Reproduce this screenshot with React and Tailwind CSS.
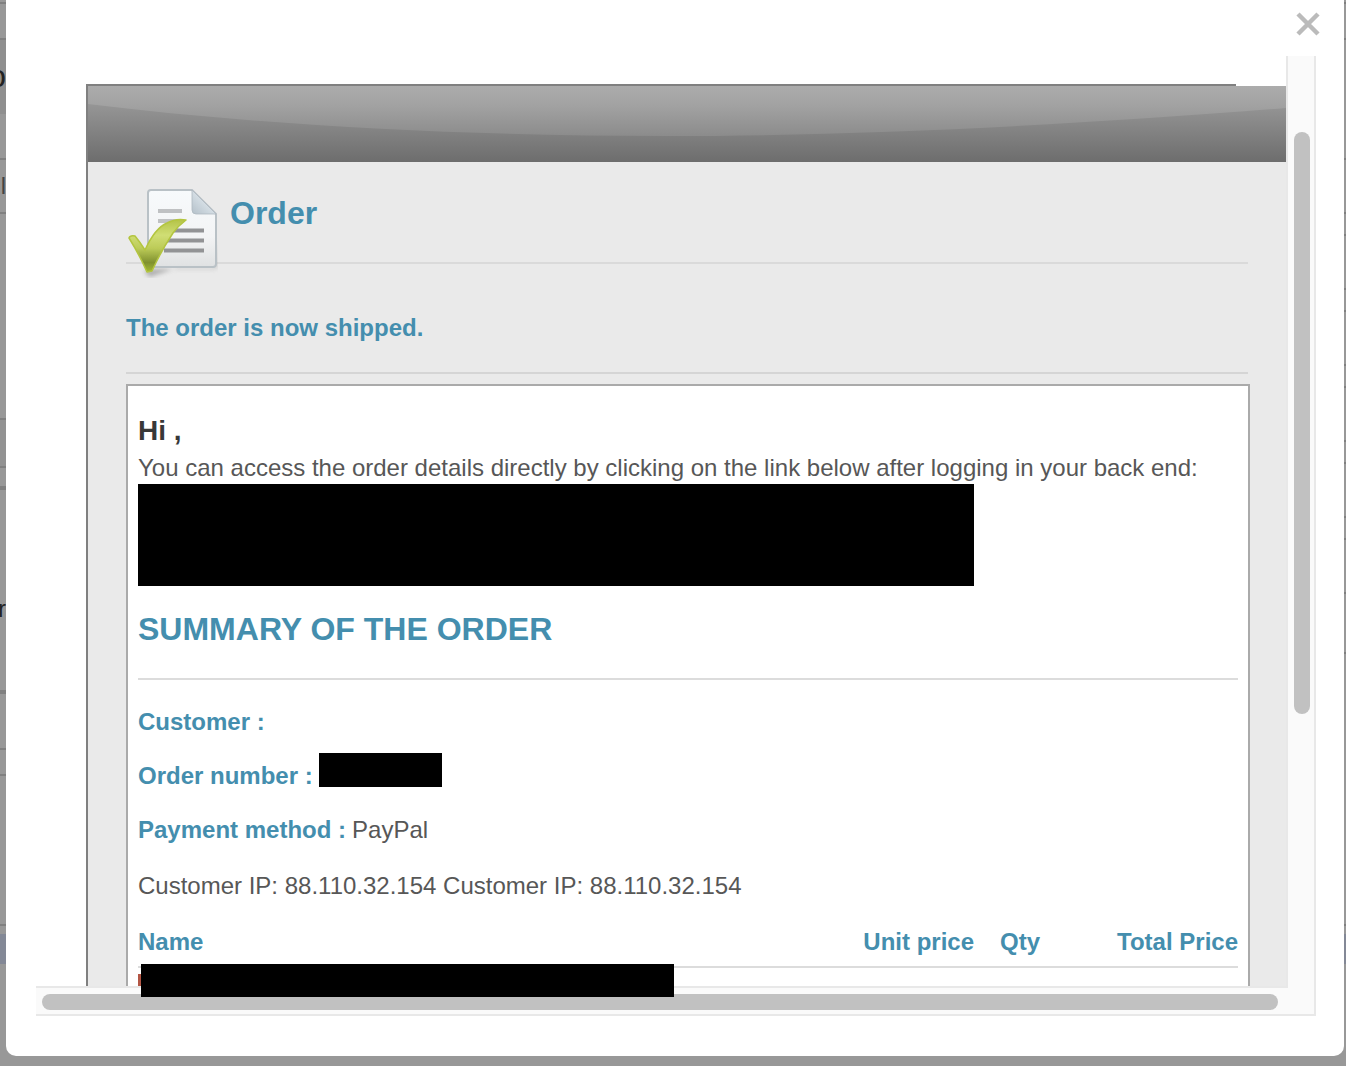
import React from 'react'

// Rows of the page behind the dialog, only their ends show at its sides
const leftRows = [
  'h-1 border-b-2',
  'h-9 border-b-2',
  'h-[74px] bg-[#8f8f8f]',
  'h-[46px] border-b-2',
  'h-[54px] border-b-2',
  'h-[206px] border-b-2 border-[#676767]',
  'h-12 border-b-2 border-[#676767] bg-[#929292]',
  'h-[22px] border-b-4',
  'h-[204px] border-b-4',
  'h-14 border-b-2',
  'h-[26px] border-b-2',
  'h-[150px] border-b-2',
  'h-2',
  'h-[30px] bg-[#838896]',
]

const leftText = {
  2: { text: 'o', className: 'text-[32px] leading-[72px]' },
  4: { text: 'l', className: 'text-2xl leading-[52px] text-[#444]' },
  8: { text: 'r', className: 'text-2xl leading-[238px]' },
}

const rightRows = [
  'h-1 border-b-2',
  'h-9 border-b-2',
  'h-[120px] border-b-2',
  'h-[54px] border-b-2',
  'h-[22px] border-b-2',
  'h-[54px] border-b-2',
  'h-[22px] border-b-2',
  'h-[54px] border-b-2',
  'h-[22px] border-b-2',
  'h-[54px] border-b-2',
  'h-[22px] border-b-2',
  'h-[54px] border-b-2',
  'h-[22px] border-b-2',
  'h-[54px] border-b-2',
  'h-[60px] border-b-2',
  'h-[272px] border-b-2',
  'h-2',
  'h-[30px] bg-[#838896]',
]

function PageEdge({ rows, labels = {}, className }) {
  return (
    <div aria-hidden="true" className={`shrink-0 overflow-hidden text-[#222] ${className}`}>
      {rows.map((row, i) => (
        <div key={i} className={`flex justify-end overflow-hidden border-[#808080] ${row}`}>
          {labels[i] && <span className={labels[i].className}>{labels[i].text}</span>}
        </div>
      ))}
    </div>
  )
}

function OrderIcon() {
  return (
    <svg viewBox="0 0 92 92" className="h-[92px] w-[92px] shrink-0" aria-hidden="true">
      <defs>
        <linearGradient id="paper" x1="0" y1="0" x2="0" y2="1">
          <stop offset="0" stopColor="#f7fafc" />
          <stop offset="0.6" stopColor="#f3f4f5" />
          <stop offset="1" stopColor="#dfe1e2" />
        </linearGradient>
        <linearGradient id="fold" x1="0" y1="1" x2="1" y2="0">
          <stop offset="0" stopColor="#b4c0c9" />
          <stop offset="0.6" stopColor="#dbe4ea" />
          <stop offset="1" stopColor="#c5ced4" />
        </linearGradient>
        <linearGradient id="tick" x1="0" y1="0" x2="0" y2="1">
          <stop offset="0" stopColor="#b4c348" />
          <stop offset="0.3" stopColor="#d0de74" />
          <stop offset="0.55" stopColor="#bccb58" />
          <stop offset="0.82" stopColor="#80912f" />
          <stop offset="1" stopColor="#a5bb33" />
        </linearGradient>
        <filter id="shadow" x="-20%" y="-20%" width="140%" height="140%">
          <feGaussianBlur stdDeviation="2" />
        </filter>
        <filter id="soft" x="-10%" y="-10%" width="120%" height="120%">
          <feGaussianBlur stdDeviation="0.5" />
        </filter>
      </defs>
      <path d="M23 83h66l2-30v29H50L24 91l-6-5z" fill="#777" opacity="0.5" filter="url(#shadow)" />
      <g filter="url(#soft)">
        <path
          d="M25 4h41l24 24v50q0 3-3 3H25q-3 0-3-3V7q0-3 3-3z"
          fill="url(#paper)"
          stroke="#b9c1c6"
          strokeWidth="2"
        />
        <path d="M66 4l24 24H70q-4 0-4-4z" fill="url(#fold)" stroke="#aeb9c0" strokeWidth="0.8" />
        <g strokeWidth="4">
          <path d="M32 25h24M32 35h24" stroke="#bfc1c3" />
          <path d="M38 44.500h40M38 54.500h40M38 64.500h40" stroke="#929395" />
        </g>
        <path
          d="M3 52q1-3 6-2 5 6 10 14Q29 42 41 37q9-5 19-3-8 6-13 13Q35 65 26 85l-5 1Q13 68 3 52z"
          fill="url(#tick)"
          stroke="#b3c53f"
          strokeWidth="1.5"
          strokeLinejoin="round"
        />
      </g>
    </svg>
  )
}

function Banner() {
  return (
    <svg viewBox="0 0 1198 76" preserveAspectRatio="none" className="block h-[76px] w-full" aria-hidden="true">
      <defs>
        <linearGradient id="bar" x1="0" y1="0" x2="0" y2="1">
          <stop offset="0" stopColor="#a0a0a0" />
          <stop offset="0.25" stopColor="#959595" />
          <stop offset="1" stopColor="#6d6d6d" />
        </linearGradient>
        <linearGradient id="gloss" gradientUnits="userSpaceOnUse" x1="0" y1="0" x2="0" y2="52">
          <stop offset="0" stopColor="#acacac" />
          <stop offset="0.4" stopColor="#a1a1a1" />
          <stop offset="1" stopColor="#8a8a8a" />
        </linearGradient>
      </defs>
      <path d="M0 0h1198v76H0z" fill="url(#bar)" />
      <path d="M0 0v18C180 40 380 50 580 50S1000 38 1198 22V0z" fill="url(#gloss)" />
    </svg>
  )
}

function Field({ label, children }) {
  return (
    <div className="flex h-[54px] gap-1.5 leading-[54px]">
      <dt className="font-bold text-[#448eae]">{label}</dt>
      <dd>{children}</dd>
    </div>
  )
}

function Email() {
  return (
    <div className="pt-7 pl-[50px]">
      <div className="mr-[50px] h-0.5 bg-[#808080]" />
      <div className="border-l-2 border-[#808080] bg-[#eaeaea]">
        <Banner />
        <div className="px-[38px] pt-6">
          <div className="flex h-[78px] gap-3 border-b-2 border-[#dadada]">
            <OrderIcon />
            <h1 className="text-[32px] leading-[54px] font-bold text-[#448eae]">Order</h1>
          </div>
          <p className="border-b-2 border-[#d5d5d5] pt-[46px] pb-[26px] text-2xl leading-9 font-bold text-[#448eae]">
            The order is now shipped.
          </p>

          <div className="mt-2.5 -mr-0.5 border-2 border-[#aaa] bg-white px-2.5 pt-6 pb-10 text-2xl text-[#575757]">
            <h2 className="text-[28px] leading-[42px] font-bold text-[#383838]">Hi ,</h2>
            <p className="leading-8 whitespace-nowrap">
              You can access the order details directly by clicking on the link below after logging in your back end:
            </p>
            <div className="h-[102px] w-[836px] bg-black" />

            <h2 className="border-b-2 border-[#dcdcdc] pt-6 pb-[30px] text-[32px] leading-[38px] font-bold text-[#448eae]">
              SUMMARY OF THE ORDER
            </h2>
            <dl className="pt-[15px]">
              <Field label="Customer :" />
              <Field label="Order number :">
                <div className="mt-1 h-[34px] w-[123px] bg-black" />
              </Field>
              <Field label="Payment method :">PayPal</Field>
            </dl>
            <p className="leading-[58px]">Customer IP: 88.110.32.154 Customer IP: 88.110.32.154</p>

            <table className="w-full border-separate border-spacing-0">
              <thead>
                <tr className="leading-[46px] text-[#448eae]">
                  <th className="border-b-2 border-[#dcdcdc] pt-1 pb-px text-left">Name</th>
                  <th className="w-[180px] border-b-2 border-[#dcdcdc] pt-1 pb-px text-right">Unit price</th>
                  <th className="w-[66px] border-b-2 border-[#dcdcdc] pt-1 pb-px text-right">Qty</th>
                  <th className="w-[198px] border-b-2 border-[#dcdcdc] pt-1 pb-px text-right">Total Price</th>
                </tr>
              </thead>
              <tbody>
                <tr>
                  <td colSpan={4} className="pt-1.5">
                    <div className="h-10 w-10 bg-[#b35645]" />
                  </td>
                </tr>
              </tbody>
            </table>
          </div>
        </div>
      </div>
    </div>
  )
}

export default function App() {
  return (
    <div className="flex h-screen overflow-hidden bg-[#989898] font-['Liberation_Sans',Arial,sans-serif]">
      <PageEdge rows={leftRows} labels={leftText} className="w-1.5" />

      <div role="dialog" aria-label="Order" className="mb-2.5 flex min-w-0 flex-1 flex-col rounded-b-[10px] bg-white pr-7 pb-10 pl-[30px]">
        <div className="flex h-14 shrink-0 justify-end">
          <button type="button" aria-label="Close" className="-mr-1 mt-3 h-6 w-6">
            <svg viewBox="0 0 24 24" className="h-6 w-6" stroke="#bbb" strokeWidth="4.500">
              <path d="M2 2l20 20M22 2L2 22" />
            </svg>
          </button>
        </div>

        <div className="relative flex min-h-0 flex-1 flex-col">
          <div className="flex min-h-0 flex-1">
            <div className="min-w-0 flex-1 overflow-hidden">
              <Email />
            </div>
            {/* Vertical scrollbar */}
            <div className="flex w-[30px] flex-col border-x-2 border-[#e8e8e8] bg-[#fafafa] pl-1.5">
              <div className="flex-[76]" />
              <div className="w-4 flex-[582] rounded-full bg-[#c1c1c1]" />
              <div className="flex-[272]" />
            </div>
          </div>
          {/* Horizontal scrollbar */}
          <div className="flex h-[30px] shrink-0">
            <div className="flex-1 border-y-2 border-[#e8e8e8] bg-[#fafafa] pt-1.5 pr-2.5 pl-1.5">
              <div className="h-4 rounded-full bg-[#c1c1c1]" />
            </div>
            <div className="w-7 border-r-2 border-b-2 border-[#e8e8e8] bg-[#fafafa]" />
          </div>
          <div className="absolute bottom-[19px] left-[105px] h-[33px] w-[533px] bg-black" />
        </div>
      </div>

      <PageEdge rows={rightRows} className="w-0.5" />
    </div>
  )
}
